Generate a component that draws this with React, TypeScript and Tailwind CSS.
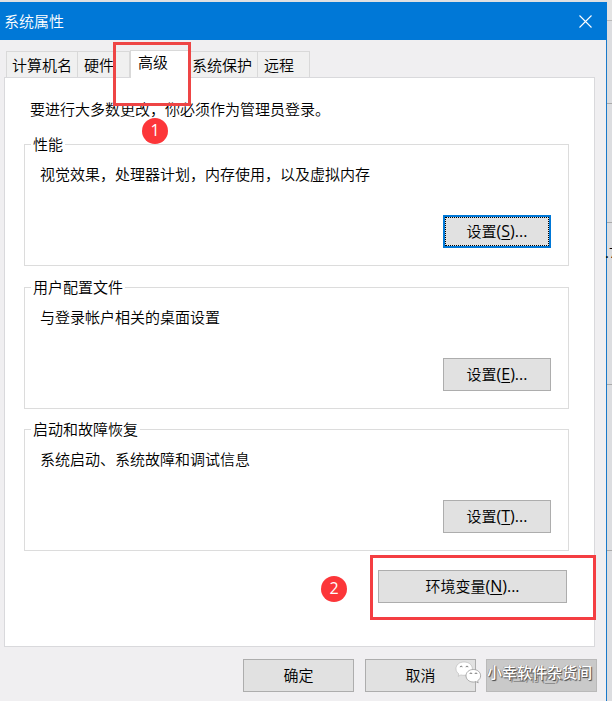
import type { ReactNode } from "react";
import { clsx } from "clsx";

const tones = {
  normal: "border border-[#adadad] bg-[#e1e1e1]",
  focused: "border-2 border-[#0078d7] bg-[#e1e1e1]",
  disabled: "border border-[#b9b9b9] bg-[#c9c9c9] text-[#8e8e8e]",
};

const Button = ({
  label,
  hotkey,
  tone = "normal",
  className,
}: {
  label: string;
  hotkey?: string;
  tone?: keyof typeof tones;
  className?: string;
}) => (
  <button
    className={clsx(
      "flex h-[33px] shrink-0 items-center justify-center leading-none",
      tones[tone],
      className,
    )}
  >
    <span
      className={clsx(
        "flex h-full w-full items-center justify-center pb-px",
        tone === "focused" && "border border-dotted border-black",
      )}
    >
      {label}
      {hotkey && (
        <span className="text-base leading-none font-normal">
          (<span className="underline decoration-1 underline-offset-2">{hotkey}</span>)...
        </span>
      )}
    </span>
  </button>
);

const Group = ({
  title,
  text,
  children,
}: {
  title: string;
  text: string;
  children: ReactNode;
}) => (
  <section className="flex h-[122px] w-[545px] flex-col border border-[#dcdcdc]">
    <h2 className="-mt-[11px] ml-[6px] h-5 self-start bg-white px-[2px] leading-5">
      {title}
    </h2>
    <p className="mt-[10px] ml-[15px] h-5 leading-5">{text}</p>
    <div className="mt-[31px] mr-[17px] flex justify-end">{children}</div>
  </section>
);

const Tab = ({ label, className }: { label: string; className: string }) => (
  <div
    className={clsx(
      "h-[26px] border border-b-0 border-[#d9d9d9] bg-[#f0f0f0] pt-[3px] leading-5",
      className,
    )}
  >
    {label}
  </div>
);

const Marker = ({ value, className }: { value: number; className: string }) => (
  <div
    className={clsx(
      "absolute flex size-[26px] items-center justify-center rounded-full bg-[#fc3639] pb-[2px] text-base leading-none font-normal text-white",
      className,
    )}
  >
    {value}
  </div>
);

const WeChatMark = () => (
  <svg width="27" height="24" viewBox="0 0 27 24" fill="none">
    <path
      d="M9 1C4.300 1 1 3.900 1 7.700c0 2.200 1 4 2.900 5.200L3.200 15.300l2.700-1.400c1 .3 2 .4 3.100.4 4.700 0 8.300-2.900 8.300-6.700S13.700 1 9 1Z"
      fill="#fff"
      stroke="#b5b5b5"
      strokeWidth=".6"
    />
    <path
      d="M18.300 8.500c-4.200 0-7.300 2.700-7.300 6.300 0 3.500 3.200 6.200 7.300 6.200.9 0 1.800-.1 2.600-.4l2.300 1.300-.6-2.100c1.900-1.200 3-3 3-5 0-3.600-3.200-6.300-7.300-6.300Z"
      fill="#fff"
      stroke="#8c8c8c"
      strokeWidth=".7"
    />
    <g stroke="#666" strokeWidth=".9">
      <path d="M5.200 6.200a1 1 0 0 1 2 0M11 6.200a1 1 0 0 1 2 0" />
      <path d="M14.900 13a1 1 0 0 1 2 0M20 13a1 1 0 0 1 2 0" />
    </g>
  </svg>
);

// Sliver of the window that lies behind the dialog
const Backdrop = () => (
  <div className="flex w-[5px] flex-col bg-[#dcdde0]">
    <div className="h-[21px] shrink-0 border-b border-[#b8b8b8] bg-[#e4e4e4]" />
    <div className="h-[83px] shrink-0 border-b border-[#aaa]" />
    <div className="h-[119px] shrink-0 border-b border-[#aaa]" />
    <div className="h-[162px] shrink-0 border-b border-[#aaa] pt-[19px] leading-5">
      <span className="-ml-[2px] font-normal">.7</span>
    </div>
    <div className="h-[166px] shrink-0 border-b border-[#aaa]" />
  </div>
);

export default function App() {
  return (
    <div className="relative flex h-[701px] w-[612px] overflow-hidden bg-[#dfe0e2] font-['Open_Sans','Noto_Sans_CJK_SC',sans-serif] text-[15px] font-[350] text-black">
      <main className="mt-[2px] flex w-[607px] shrink-0 flex-col border-r border-[#1979ca] bg-[#f0eff1]">
        <header className="-mr-px flex h-[38px] shrink-0 items-center justify-between bg-[#0078d7] pr-[15px] pl-1 text-white">
          <h1 className="font-[350]">系统属性</h1>
          <svg width="13" height="13" viewBox="0 0 13 13" stroke="#fff" strokeWidth="1.100">
            <path d="M.5.500l12 12M12.500.500l-12 12" />
          </svg>
        </header>

        <nav className="mt-[10px] ml-[6px] flex h-[27px] shrink-0 items-end">
          <Tab label="计算机名" className="w-[72px] pl-[5px]" />
          <Tab label="硬件" className="w-[52px] border-l-0 pl-[6px]" />
          <div className="z-10 -mb-px h-[28px] w-[60px] border border-b-0 border-[#d9d9d9] bg-white pt-px pl-[7px] leading-5">
            高级
          </div>
          <Tab label="系统保护" className="w-[68px] border-l-0 pl-[2px]" />
          <Tab label="远程" className="w-[52px] border-l-0 pl-[6px]" />
        </nav>

        <div className="ml-1 flex h-[570px] w-[591px] shrink-0 flex-col border border-[#d9d9dc] bg-white pl-[19px]">
          <p className="mt-[21px] ml-[6px] h-5 leading-5">
            要进行大多数更改，你必须作为管理员登录。
          </p>
          <div className="mt-[25px] flex flex-col">
            <Group title="性能" text="视觉效果，处理器计划，内存使用，以及虚拟内存">
              <Button label="设置" hotkey="S" tone="focused" className="w-[108px]" />
            </Group>
            <div className="h-[21px]" />
            <Group title="用户配置文件" text="与登录帐户相关的桌面设置">
              <Button label="设置" hotkey="E" className="w-[108px]" />
            </Group>
            <div className="h-5" />
            <Group title="启动和故障恢复" text="系统启动、系统故障和调试信息">
              <Button label="设置" hotkey="T" className="w-[108px]" />
            </Group>
          </div>
          <div className="mt-[19px] mr-[27px] flex justify-end">
            <Button label="环境变量" hotkey="N" className="w-[189px]" />
          </div>
        </div>

        <footer className="mt-3 mr-[9px] flex justify-end gap-[11px]">
          <Button label="确定" className="w-[111px]" />
          <Button label="取消" className="w-[111px]" />
          <Button label="应用" hotkey="A" tone="disabled" className="-ml-px w-[111px]" />
        </footer>
      </main>
      <Backdrop />

      <div className="absolute top-[42px] left-[113px] z-20 h-[64px] w-[78px] border-3 border-[#ee4545]" />
      <Marker value={1} className="top-[118px] left-[142px]" />
      <div className="absolute top-[555px] left-[370px] h-[65px] w-[226px] border-3 border-[#f43e42]" />
      <Marker value={2} className="top-[576px] left-[321px]" />

      <div className="absolute top-[661px] left-[455px] flex items-start gap-[5px]">
        <WeChatMark />
        <span className="text-[15px] leading-[23px] font-medium whitespace-nowrap text-white [text-shadow:1px_1px_1px_#444,-0.5px_0_0.5px_#777]">
          小幸软件杂货间
        </span>
      </div>
    </div>
  );
}
